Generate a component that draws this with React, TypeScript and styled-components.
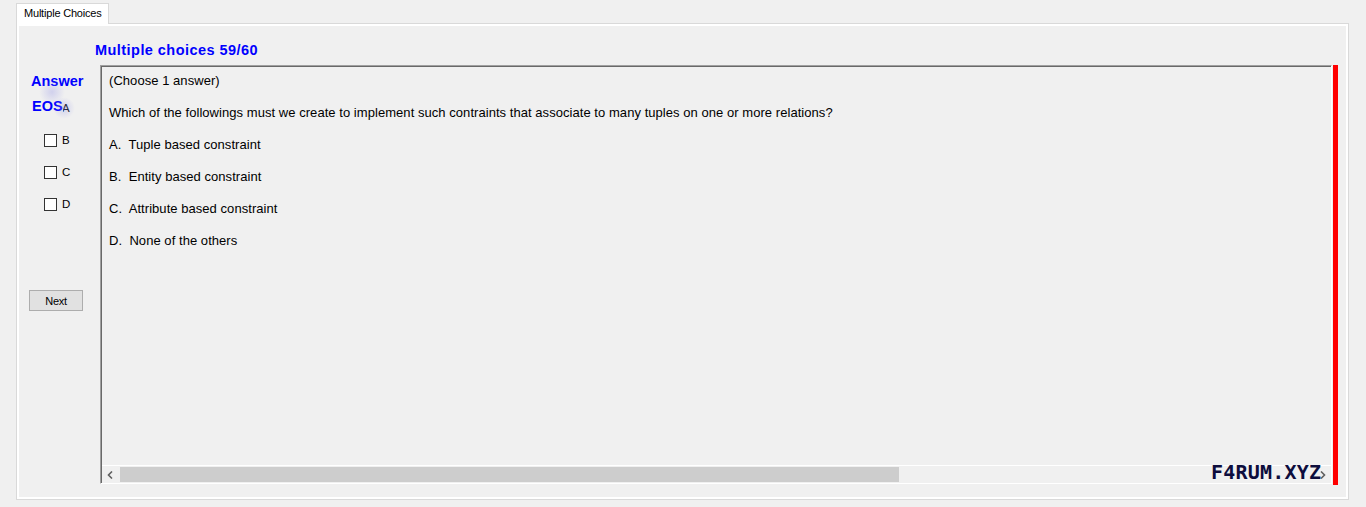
import React from "react";
import styled, { createGlobalStyle } from "styled-components";

const Global = createGlobalStyle`
  html, body { margin: 0; padding: 0; background: #f0f0f0; }
  body { font-family: "Liberation Sans", Arial, sans-serif; }
`;

const Screen = styled.div`
  position: relative;
  width: 1366px;
  height: 507px;
  background: #f0f0f0;
  overflow: hidden;
  box-sizing: border-box;
`;

const TabStrip = styled.div`
  display: flex;
  padding: 3px 0 0 16px;
  height: 20px;
`;

const Tab = styled.div`
  box-sizing: border-box;
  height: 21px;
  padding: 0 6px 0 7px;
  border: 1px solid #d9d9d9;
  border-bottom: none;
  background: #ffffff;
  font-size: 11px;
  letter-spacing: -0.2px;
  line-height: 19px;
  color: #000;
  position: relative;
  z-index: 1;
`;

const TabPage = styled.div`
  box-sizing: border-box;
  margin-left: 16px;
  width: 1333px;
  height: 477px;
  border: 1px solid #d9d9d9;
  box-shadow: inset 0 0 0 2px #ffffff;
  display: flex;
  flex-direction: column;
`;

const Title = styled.div`
  margin: 17px 0 0 78px;
  font-weight: bold;
  font-size: 14.5px;
  letter-spacing: 0.45px;
  line-height: 18px;
  color: #0000ff;
`;

const Body = styled.div`
  display: flex;
  margin-top: 6px;
`;

const LeftCol = styled.div`
  position: relative;
  width: 83px;
  display: flex;
  flex-direction: column;
`;

const AnswerLabel = styled.div`
  margin: 7px 0 2px 14px;
  font-weight: bold;
  font-size: 14.5px;
  line-height: 18px;
  color: #0000ff;
`;

const EosLabel = styled.div`
  position: absolute;
  left: 15px;
  top: 32px;
  font-weight: bold;
  font-size: 14.5px;
  line-height: 18px;
  color: #0000ff;
  background: #f0f0f0;
  z-index: 2;
`;

const Glow = styled.div<{ $x: number; $y: number; $s: number }>`
  position: absolute;
  left: ${(p) => p.$x}px;
  top: ${(p) => p.$y}px;
  width: ${(p) => p.$s}px;
  height: ${(p) => p.$s}px;
  border-radius: 50%;
  background: radial-gradient(circle, rgba(150, 150, 230, 0.35) 0%, rgba(150, 150, 230, 0) 70%);
  z-index: 3;
  pointer-events: none;
`;

const ChoiceRow = styled.label`
  display: flex;
  align-items: center;
  height: 32px;
  padding-left: 27px;
  gap: 5px;
  font-size: 11.5px;
  color: #000;
`;

const Box = styled.span`
  box-sizing: border-box;
  width: 13px;
  height: 13px;
  border: 1px solid #333333;
  background: #ffffff;
`;

const NextButton = styled.button`
  box-sizing: border-box;
  margin: 70px 0 0 12px;
  width: 54px;
  height: 21px;
  padding: 0;
  border: 1px solid #adadad;
  background: #e1e1e1;
  font-family: "Liberation Sans", Arial, sans-serif;
  font-size: 11px;
  letter-spacing: -0.3px;
  color: #000;
`;

const PanelWrap = styled.div`
  display: flex;
  gap: 1px;
`;

const Panel = styled.div`
  box-sizing: border-box;
  width: 1232px;
  height: 419px;
  border: 1px solid;
  border-color: #a0a0a0 #ffffff #ffffff #a0a0a0;
  box-shadow: inset 1px 1px 0 #696969;
  display: flex;
  flex-direction: column;
`;

const Content = styled.div`
  flex: 1;
  padding: 7px 0 0 8px;
  display: flex;
  flex-direction: column;
  gap: 16px;
`;

const Line = styled.div`
  font-size: 13px;
  line-height: 16px;
  letter-spacing: 0.05px;
  color: #000;
  white-space: pre;
`;

const RedBar = styled.div`
  width: 5px;
  height: 420px;
  background: #ff0000;
`;

const HScroll = styled.div`
  display: flex;
  height: 17px;
  margin-left: 1px;
  border-top: 1px solid #ffffff;
  background: #f0f0f0;
`;

const ArrowBtn = styled.div`
  width: 17px;
  display: flex;
  align-items: center;
  justify-content: center;
`;

const Track = styled.div`
  flex: 1;
  display: flex;
  align-items: center;
  padding-left: 1px;
`;

const Thumb = styled.div`
  width: 779px;
  height: 15px;
  background: #cdcdcd;
`;

const Watermark = styled.div`
  position: absolute;
  left: 1211px;
  top: 460px;
  font-family: "DejaVu Sans Mono", "Liberation Mono", monospace;
  font-weight: bold;
  font-size: 20px;
  line-height: 24px;
  color: #0d0d3d;
  letter-spacing: 0.2px;
  z-index: 5;
`;

const Chevron = ({ dir }: { dir: "left" | "right" }) => (
  <svg width="7" height="8" viewBox="0 0 7 8">
    <path
      d={dir === "left" ? "M5 0.5 L1.5 4 L5 7.5" : "M2 0.5 L5.5 4 L2 7.5"}
      fill="none"
      stroke="#606060"
      strokeWidth="1.6"
    />
  </svg>
);

const lines = [
  "(Choose 1 answer)",
  "Which of the followings must we create to implement such contraints that associate to many tuples on one or more relations?",
  "A.  Tuple based constraint",
  "B.  Entity based constraint",
  "C.  Attribute based constraint",
  "D.  None of the others",
];

export default function App() {
  return (
    <Screen>
      <Global />
      <TabStrip>
        <Tab>Multiple Choices</Tab>
      </TabStrip>
      <TabPage>
        <Title>Multiple choices 59/60</Title>
        <Body>
          <LeftCol>
            <AnswerLabel>Answer</AnswerLabel>
            <EosLabel>EOS</EosLabel>
            <Glow $x={22} $y={14} $s={26} />
            <Glow $x={36} $y={32} $s={22} />
            {["A", "B", "C", "D"].map((c) => (
              <ChoiceRow key={c}>
                <Box />
                {c}
              </ChoiceRow>
            ))}
            <NextButton>Next</NextButton>
          </LeftCol>
          <PanelWrap>
            <Panel>
              <Content>
                {lines.map((l) => (
                  <Line key={l}>{l}</Line>
                ))}
              </Content>
              <HScroll>
                <ArrowBtn>
                  <Chevron dir="left" />
                </ArrowBtn>
                <Track>
                  <Thumb />
                </Track>
                <ArrowBtn>
                  <Chevron dir="right" />
                </ArrowBtn>
              </HScroll>
            </Panel>
            <RedBar />
          </PanelWrap>
        </Body>
      </TabPage>
      <Watermark>F4RUM.XYZ</Watermark>
    </Screen>
  );
}
